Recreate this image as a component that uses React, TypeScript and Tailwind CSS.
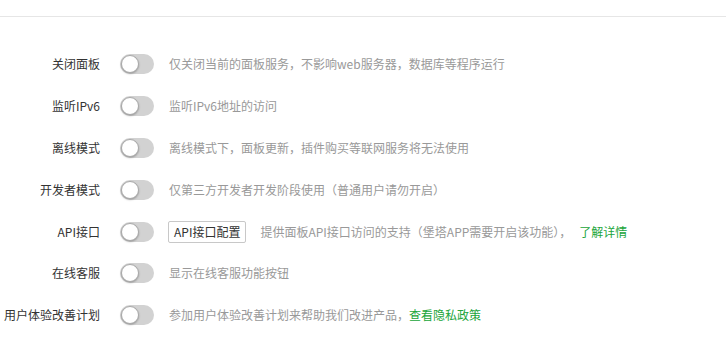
import React from "react";

const font = { fontFamily: '"Noto Sans CJK SC", "Noto Sans", sans-serif' };

function Toggle() {
  return (
    <div className="relative w-[34px] h-[20px] rounded-full bg-[#d2d2d2] shrink-0">
      <div className="absolute left-[1px] top-[1px] w-[18px] h-[18px] rounded-full bg-white border border-[#a8a8a8] shadow-[0_1px_2px_rgba(0,0,0,0.25)]" />
    </div>
  );
}

type Row = { label: string; desc: React.ReactNode; button?: string };

const rows: Row[] = [
  { label: "关闭面板", desc: "仅关闭当前的面板服务，不影响web服务器，数据库等程序运行" },
  { label: "监听IPv6", desc: "监听IPv6地址的访问" },
  { label: "离线模式", desc: "离线模式下，面板更新，插件购买等联网服务将无法使用" },
  { label: "开发者模式", desc: "仅第三方开发者开发阶段使用（普通用户请勿开启）" },
  {
    label: "API接口",
    button: "API接口配置",
    desc: (
      <>
        提供面板API接口访问的支持（堡塔APP需要开启该功能），
        <span className="text-[#20a53a] ml-[8px]">了解详情</span>
      </>
    ),
  },
  { label: "在线客服", desc: "显示在线客服功能按钮" },
  {
    label: "用户体验改善计划",
    desc: (
      <>
        参加用户体验改善计划来帮助我们改进产品，
        <span className="text-[#20a53a]">查看隐私政策</span>
      </>
    ),
  },
];

export default function App() {
  return (
    <div className="w-[727px] h-[342px] bg-white overflow-hidden text-[12px]" style={font}>
      <div className="h-[17px] border-b border-[#e6e6e6] mr-[1px]" />
      <div className="pt-[26px] flex flex-col">
        {rows.map((r) => (
          <div key={r.label} className="h-[41.9px] flex items-center">
            <div className="w-[100px] text-right text-[#333] whitespace-nowrap leading-none">{r.label}</div>
            <div className="ml-[20px]">
              <Toggle />
            </div>
            {r.button && (
              <div className="ml-[14px] h-[22px] px-[5px] border border-[#c8c8c8] rounded-[2px] text-[#333] flex items-center whitespace-nowrap text-[12px]">
                {r.button}
              </div>
            )}
            <div className={(r.button ? "ml-[14px]" : "ml-[15px]") + " text-[#999] whitespace-nowrap leading-none"}>
              {r.desc}
            </div>
          </div>
        ))}
      </div>
    </div>
  );
}
